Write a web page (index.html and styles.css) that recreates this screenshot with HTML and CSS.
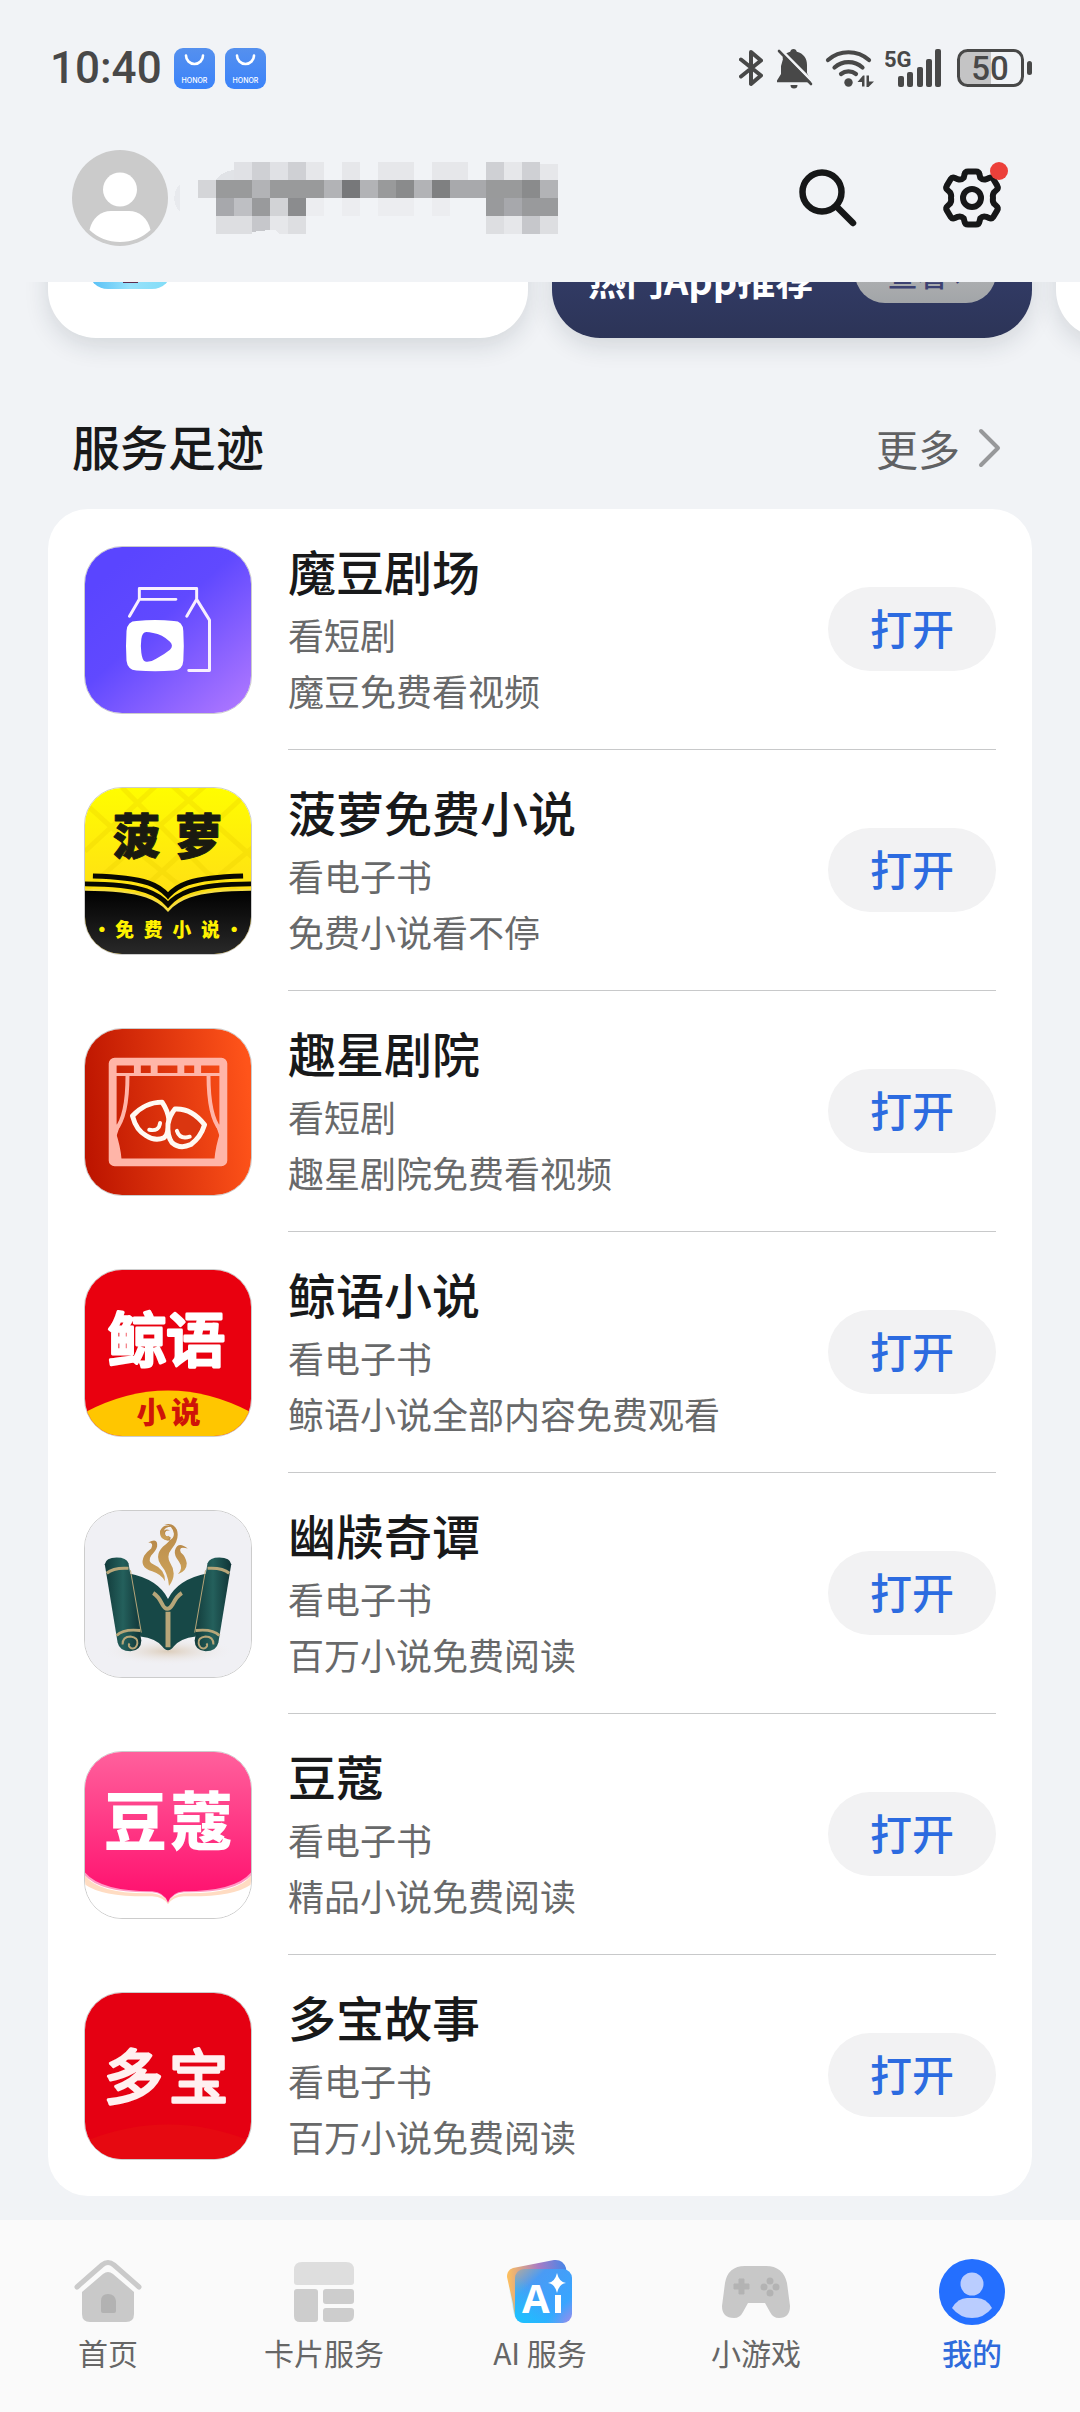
FILE: index.html
```html
<!DOCTYPE html>
<html lang="zh-CN">
<head>
<meta charset="utf-8">
<meta name="viewport" content="width=device-width, initial-scale=1">
<title>我的</title>
<link rel="stylesheet" href="styles.css">
</head>
<body>
<div class="status-bar">
  <span class="clock">10:40</span>
  <svg class="honor" viewBox="0 0 41 41" aria-hidden="true">
    <defs><linearGradient id="honor-bg" x1="0" y1="0" x2="0" y2="1"><stop offset="0" stop-color="#5590ee"/><stop offset="1" stop-color="#3b83fa"/></linearGradient></defs>
    <rect width="41" height="41" rx="9" fill="url(#honor-bg)"/>
    <path d="M12 7.500a8.500 8.500 0 0 0 17 0" fill="none" stroke="#fff" stroke-width="2.600" stroke-linecap="round"/>
    <text x="20.500" y="35" class="honor-name">HONOR</text>
  </svg>
  <svg class="honor" viewBox="0 0 41 41" aria-hidden="true">
    <rect width="41" height="41" rx="9" fill="url(#honor-bg)"/>
    <path d="M12 7.500a8.500 8.500 0 0 0 17 0" fill="none" stroke="#fff" stroke-width="2.600" stroke-linecap="round"/>
    <text x="20.500" y="35" class="honor-name">HONOR</text>
  </svg>
  <div class="status-icons">
    <svg width="24" height="40" viewBox="0 0 24 40" fill="none" stroke="#484848" stroke-width="4" stroke-linecap="round" stroke-linejoin="round" aria-hidden="true">
      <path d="M2 11.500 22 27.500 12 36V4l10 8.500L2 28.500"/>
    </svg>
    <svg width="38" height="42" viewBox="0 0 38 42" aria-hidden="true">
      <path d="M18.500 2c1.800 0 3 1.200 3.300 2.800C28.500 6.400 32 11.500 32 18v8l4 7.500v1.800H2v-1.800L6 27V18c0-6.500 3-11.600 9.200-13.200C15.500 3.200 16.700 2 18.500 2zM15.500 38h7a3.500 3.500 0 0 1-7 0z" fill="#484848"/>
      <path d="M5 2 41 38M3 2l1 12" stroke="#f1f3f6" stroke-width="3"/>
      <path d="M0 0h1l7 12-4 14z" fill="#f1f3f6"/>
      <path d="m4 4 32 33" stroke="#484848" stroke-width="2.600" stroke-linecap="round"/>
    </svg>
    <svg class="wifi" width="48" height="40" viewBox="0 0 48 40" fill="none" stroke="#484848" stroke-width="4.200" stroke-linecap="round" aria-hidden="true">
      <path d="M3 12a31 31 0 0 1 41 0M9.500 19.500a21 21 0 0 1 28 0M16 26a12 12 0 0 1 15 0"/>
      <circle cx="23.500" cy="34.500" r="4.200" fill="#484848" stroke="none"/>
      <path d="M32.500 34 38 27.500h1.500V38.500H37V34zM49 33.500 43.500 39H41.500V27.500H44v6z" fill="#484848" stroke="none"/>
    </svg>
    <svg width="60" height="40" viewBox="0 0 60 40" fill="#484848" aria-hidden="true">
      <text x="-1" y="19" class="signal-label">5G</text>
      <rect x="13" y="28" width="6" height="11" rx="2"/><rect x="22" y="24" width="6" height="15" rx="2"/><rect x="32" y="19" width="6" height="20" rx="2"/><rect x="41" y="11" width="6" height="28" rx="2"/><rect x="50" y="1" width="6" height="38" rx="2"/>
    </svg>
    <svg width="75" height="40" viewBox="0 0 75 40" aria-hidden="true">
      <path d="M11 3h23v34H11a9 9 0 0 1-9-9V12a9 9 0 0 1 9-9z" fill="#c4c4c5"/>
      <rect x="1.500" y="2.500" width="64" height="35" rx="9" fill="none" stroke="#484848" stroke-width="3"/>
      <rect x="70" y="13" width="5" height="14" rx="2.500" fill="#484848"/>
      <text x="33" y="32" class="battery-level">50</text>
    </svg>
  </div>
</div>

<header class="profile">
  <svg class="avatar" viewBox="0 0 96 96" role="img" aria-label="头像">
    <circle cx="48" cy="48" r="48" fill="#cbcbcb"/>
    <circle cx="48" cy="39.500" r="17" fill="#fff"/>
    <path d="M17.500 80C20 68 29 61 39 61h18c10 0 19 7 21.500 19C70 88 60 92 48 92s-22-4-30.500-12z" fill="#fff"/>
  </svg>
  <svg class="masked-name" viewBox="0 0 396 72" shape-rendering="crispEdges" role="img" aria-label="已隐藏的账号">
    <path d="M9 22a20 20 0 0 0 0 28z" fill="#e8eaee"/>
    <path d="M45 17c6-7 14-9 20-9V0h-2 18v18H45z" fill="#e1e3e7"/>
    <g transform="translate(27 0)">
      <path d="M36 0h18v18H36zM72 0h18v18H72z" fill="#e0e1e5"/>
      <path d="M54 0h18v18H54zM90 0h18v18H90zM288 0h18v18h-18zM324 0h18v18h-18z" fill="#cfd0d4"/>
      <path d="M108 0h18v18h-18zM144 0h18v18h-18zM180 0h36v18h-36zM234 0h36v18h-36zM306 0h18v18h-18zM342 2h18v16h-18z" fill="#e6e7ea"/>
      <path d="M0 18h18v18H0z" fill="#d4d5d8"/>
      <path d="M18 18h36v18H18zM72 18h54v18H72zM180 18h18v18h-18zM288 18h36v18h-36z" fill="#999a9b"/>
      <path d="M54 18h18v18H54zM126 18h18v18h-18zM162 18h18v18h-18zM216 18h18v18h-18zM342 18h18v18h-18z" fill="#b2b3b6"/>
      <path d="M144 18h18v18h-18z" fill="#77787a"/>
      <path d="M198 18h18v18h-18zM324 18h18v18h-18z" fill="#8a8b8c"/>
      <path d="M234 18h18v18h-18z" fill="#7f8081"/>
      <path d="M252 18h36v18h-36z" fill="#a8a9ac"/>
      <path d="M18 36h18v18H18zM306 36h18v18h-18z" fill="#a7a8ac"/>
      <path d="M36 36h18v18H36z" fill="#bebfc3"/>
      <path d="M54 36h18v18H54zM288 36h18v18h-18zM324 36h36v18h-36z" fill="#999a9c"/>
      <path d="M72 36h18v18H72z" fill="#d2d3d6"/>
      <path d="M90 36h18v18H90z" fill="#8b8c8e"/>
      <path d="M108 36h18v18h-18zM144 36h18v18h-18zM180 36h36v18h-36zM234 36h18v18h-18z" fill="#ecedf0"/>
      <path d="M18 54h36v18H18zM90 54h18v18H90zM288 54h18v18h-18zM342 54h18v18h-18z" fill="#dddee1"/>
      <path d="M54 54h18v14l-18 2zM324 54h18v18h-18z" fill="#c6c7cb"/>
      <path d="M72 54h18v18h-9l-3-4h-6zM306 54h18v18h-18z" fill="#e6e7ea"/>
    </g>
  </svg>
  <div class="actions">
    <button class="icon-button" type="button" aria-label="搜索">
      <svg viewBox="0 0 72 72" fill="none" stroke="#161718" stroke-linecap="round" aria-hidden="true">
        <circle cx="30" cy="30" r="19.500" stroke-width="6.500"/><path d="m45 45 16 16" stroke-width="6.500"/>
      </svg>
    </button>
    <button class="icon-button" type="button" aria-label="设置">
      <svg viewBox="0 0 72 72" fill="none" stroke="#161718" stroke-width="6" stroke-linejoin="round" aria-hidden="true">
        <path d="M32 9.500h8q3 0 3.500 3l.8 3.200q2.500 2.700 6 1.500l2.700-1.200q2.800-1.200 4.400 1.200l3.800 6.400q1.400 2.600-.8 4.500l-2.200 2q-2 2.800-1.200 5.900-.8 3.100 1.200 5.900l2.200 2q2.200 1.900.8 4.500l-3.800 6.400q-1.600 2.400-4.400 1.200l-2.700-1.200q-3.500-1.200-6 1.500l-.8 3.200q-.5 3-3.500 3h-8q-3 0-3.500-3l-.8-3.200q-2.500-2.700-6-1.500L19 56q-2.800 1.200-4.400-1.200l-3.800-6.400q-1.400-2.600.8-4.500l2.200-2q2-2.800 1.200-5.900.8-3.100-1.200-5.900l-2.200-2q-2.200-1.900-.8-4.500l3.800-6.400Q16.200 14.800 19 16l2.700 1.200q3.500 1.200 6-1.500l.8-3.200q.5-3 3.500-3z"/>
        <circle cx="36" cy="36" r="9"/>
      </svg>
      <span class="dot"></span>
    </button>
  </div>
</header>

<main>
  <div class="carousel">
    <article class="promo">
      <svg class="promo-icon" viewBox="0 0 84 84" aria-hidden="true">
        <defs><linearGradient id="promo-bg"><stop offset="0" stop-color="#52bdf5"/><stop offset=".5" stop-color="#98e2fb"/><stop offset="1" stop-color="#7fdcf7"/></linearGradient></defs>
        <rect width="84" height="84" rx="20" fill="url(#promo-bg)"/><path d="M35 60h15v18H35z" fill="#5d2b4d"/>
      </svg>
    </article>
    <article class="promo promo-dark">
      <strong class="promo-title">热门App推荐</strong>
      <button class="promo-button" type="button">查看 ›</button>
    </article>
    <article class="promo"></article>
  </div>

  <section class="history">
    <div class="section-head">
      <h1 class="section-title">服务足迹</h1>
      <a class="more" href="#more">更多
        <svg class="chevron" viewBox="0 0 24 40" fill="none" stroke="#97989a" stroke-width="4" stroke-linecap="round" stroke-linejoin="round" aria-hidden="true"><path d="m3 3 17 17L3 37"/></svg>
      </a>
    </div>

    <ul class="app-list">
      <li class="app">
        <svg class="app-icon" viewBox="0 0 168 168" aria-hidden="true">
          <defs><linearGradient id="modou" x1=".2" y1=".1" x2="1" y2="1"><stop offset="0" stop-color="#5a45ff"/><stop offset=".35" stop-color="#6049ff"/><stop offset="1" stop-color="#b37aff"/></linearGradient></defs>
          <rect width="168" height="168" fill="url(#modou)"/>
          <path d="M45 70 55 53V42h58v11l-10 17M55 53h37M113 53l13 21v51h-21" fill="none" stroke="#f8efff" stroke-width="3" stroke-linecap="round" stroke-linejoin="round"/>
          <path fill-rule="evenodd" d="M52 75q19-2 38 0 9 0 9.500 10 1 15 0 30-.5 9-9.500 10-19 1.500-38 0-9-1-10-10-1-15 0-30 1-10 10-10zM62 86q-4 0-5 7-1 8 0 14 1 8 4 9 5 1 11-3 8-4 14-9 4-4 0-8-8-8-17-9-4-1-7-1z" fill="#fff"/>
        </svg>
        <div class="app-body">
          <div class="app-text"><h2 class="app-name">魔豆剧场</h2><p class="app-note">看短剧</p><p class="app-note">魔豆免费看视频</p></div>
          <button class="open" type="button">打开</button>
        </div>
      </li>
      <li class="app">
        <svg class="app-icon" viewBox="0 0 168 168" aria-hidden="true">
          <defs>
            <linearGradient id="boluo" x1="0" y1="0" x2="0" y2="1"><stop offset="0" stop-color="#fffd00"/><stop offset="1" stop-color="#ffce20"/></linearGradient>
            <linearGradient id="boluo-dark" x1="0" y1="0" x2="0" y2="1"><stop offset="0" stop-color="#000"/><stop offset="1" stop-color="#292929"/></linearGradient>
          </defs>
          <rect width="168" height="168" fill="url(#boluo)"/>
          <path d="M-4 12 60 70l50 40M34-4l90 90 50 30M84-6l90 80M0 64 76-6M0 104 126-6M50 110 172-2M110 110l60-50" fill="none" stroke="#e8cd00" stroke-opacity=".3" stroke-width="5"/>
          <path d="M0 103q40 0 62 7 14 5 22 14 8-9 22-14 22-7 62-7v65H0z" fill="url(#boluo-dark)"/>
          <path d="M8 89q38 1 56 7 12 4 20 13 8-9 20-13 18-6 56-7M0 97q42 0 62 7 14 5 22 14 8-9 22-14 20-7 62-7" fill="none" stroke="#080800" stroke-width="5"/>
          <path d="M0 103q42 0 62 7 14 5 22 14 8-9 22-14 20-7 62-7" fill="none" stroke="#f4dc45" stroke-width="2"/>
          <g class="logo-text boluo-name"><text x="52" y="67">菠</text><text x="115" y="67">萝</text></g>
          <g class="logo-text boluo-sub"><text x="17" y="151">·</text><text x="40" y="151">免</text><text x="69" y="151">费</text><text x="98" y="151">小</text><text x="127" y="151">说</text><text x="151" y="151">·</text></g>
        </svg>
        <div class="app-body">
          <div class="app-text"><h2 class="app-name">菠萝免费小说</h2><p class="app-note">看电子书</p><p class="app-note">免费小说看不停</p></div>
          <button class="open" type="button">打开</button>
        </div>
      </li>
      <li class="app">
        <svg class="app-icon" viewBox="0 0 168 168" aria-hidden="true">
          <defs><linearGradient id="quxing" x1="0" y1=".55" x2="1" y2=".45"><stop offset="0" stop-color="#bd1500"/><stop offset="1" stop-color="#ff541a"/></linearGradient></defs>
          <rect width="168" height="168" fill="url(#quxing)"/>
          <g fill="none" stroke="#ffb5a8">
            <rect x="28" y="33" width="112" height="102" rx="2" stroke-width="8"/>
            <path d="M31 46h106" stroke-width="3"/>
            <path d="M53 36v10M70 36v10M97 36v10M114 36v10" stroke-width="7"/>
            <path d="M43 47q0 41-12 55M125 47q0 41 12 55" stroke-width="4"/>
          </g>
          <path d="M31 104q5 15 6 28h-6zM137 104q-5 15-6 28h6zM31 96l4 3-4 12zM137 96l-4 3 4 12z" fill="#ffb5a8"/>
          <g fill="none" stroke="#fff9f2" stroke-width="5" stroke-linejoin="round" stroke-linecap="round">
            <path d="M78 74q-17 0-30 14 4 15 14 20 9 6 18 2 5-4 5-18-1-9-7-18z"/>
            <path d="M91 81q17-1 30 16-4 13-14 20-11 5-19-2-5-7-4-19 2-9 7-15z" fill="#da3610"/>
            <path d="M65 102q10 2 11-7M93 103q3 9 13 6" stroke-width="4"/>
          </g>
        </svg>
        <div class="app-body">
          <div class="app-text"><h2 class="app-name">趣星剧院</h2><p class="app-note">看短剧</p><p class="app-note">趣星剧院免费看视频</p></div>
          <button class="open" type="button">打开</button>
        </div>
      </li>
      <li class="app">
        <svg class="app-icon" viewBox="0 0 168 168" aria-hidden="true">
          <rect width="168" height="168" fill="#e9000f"/>
          <path d="M0 144q84-44 168 0v24H0z" fill="#ffc600"/>
          <g class="logo-text jingyu-name"><text x="53" y="93">鲸</text><text x="112" y="93">语</text></g>
          <g class="logo-text jingyu-sub"><text x="67" y="155">小</text><text x="102" y="155">说</text></g>
        </svg>
        <div class="app-body">
          <div class="app-text"><h2 class="app-name">鲸语小说</h2><p class="app-note">看电子书</p><p class="app-note">鲸语小说全部内容免费观看</p></div>
          <button class="open" type="button">打开</button>
        </div>
      </li>
      <li class="app">
        <svg class="app-icon" viewBox="0 0 168 168" aria-hidden="true">
          <defs>
            <linearGradient id="roll"><stop offset="0" stop-color="#123b3b"/><stop offset=".5" stop-color="#24605c"/><stop offset="1" stop-color="#103436"/></linearGradient>
            <linearGradient id="gold" x1="0" y1="0" x2="0" y2="1"><stop offset="0" stop-color="#b98a4a"/><stop offset="1" stop-color="#cda35a"/></linearGradient>
            <radialGradient id="floor"><stop offset="0" stop-color="#dccdbb"/><stop offset="1" stop-color="#f0f0f4" stop-opacity="0"/></radialGradient>
          </defs>
          <rect width="168" height="168" fill="#f0f0f4"/>
          <ellipse cx="84" cy="142" rx="68" ry="14" fill="url(#floor)"/>
          <path d="M44 63q30 6 40 26 10-20 40-26l-12 64q-16 2-22 10-6 8-12 0-6-8-22-10z" fill="#174847"/>
          <path d="M20 54q1-7 12-7 10 0 12 6l13 78q0 10-11 11-11 0-13-9z" fill="url(#roll)"/>
          <path d="M148 54q-1-7-12-7-10 0-12 6l-13 78q0 10 11 11 11 0 13-9z" fill="url(#roll)"/>
          <g fill="none" stroke="#b7a679" stroke-width="3">
            <path d="M22 63q7-6 22-5M146 63q-7-6-22-5M32 126q7-7 24-5M136 126q-7-7-24-5"/>
            <path d="M46 60l11 63M122 60l-11 63" stroke-width="1"/>
            <path d="M38 135q0-8 8-8 8 1 7 7-1 6-6 5-4-2-2-5M130 135q0-8-8-8-8 1-7 7 1 6 6 5 4-2 2-5" stroke-width="2"/>
            <path d="M69 83q5 3 9 11 5 10 11 0 4-8 9-11" stroke-width="4"/>
            <path d="M84 102v36" stroke-width="5"/>
          </g>
          <g fill="url(#gold)">
            <path d="M86 26q-5 1-5-4 1-3 5-2-4-3-7 1-3 8 5 9 6-1 6-7-2-10-10-9 9-3 13 5 3 9-5 19-6 7-2 14 8 12-1 24-1-13-8-21-7-10 2-19 10-8 7-10z"/>
            <path d="M76 20q4-8 12-4-9 0-8 6 1 5 5 3 1 4-4 4-6-2-5-9z"/>
            <path d="M64 32q10-6 9 4-1 4-6 9-4 6 2 9 12 5 12 17-4-7-13-10-14-4-8-16 3-4 7-7 3-6-3-6z"/>
            <path d="M104 38q-10-8-13 2-1 5 4 11 5 7-1 13 9-3 9-11-1-7-6-11-3-7 7-4z"/>
          </g>
        </svg>
        <div class="app-body">
          <div class="app-text"><h2 class="app-name">幽牍奇谭</h2><p class="app-note">看电子书</p><p class="app-note">百万小说免费阅读</p></div>
          <button class="open" type="button">打开</button>
        </div>
      </li>
      <li class="app">
        <svg class="app-icon" viewBox="0 0 168 168" aria-hidden="true">
          <defs><linearGradient id="doukou" x1="0" y1="0" x2="0" y2="1"><stop offset="0" stop-color="#ff609c"/><stop offset="1" stop-color="#ff0e6d"/></linearGradient></defs>
          <rect width="168" height="168" fill="#fff"/>
          <path d="M0 125q14 19 68 18 11 1 16 9 5-8 16-9 54 1 68-18v9q-18 13-68 12-12 1-16 8-4-7-16-8-50 1-68-12z" fill="#ffdcc2"/>
          <path d="M0 0h168v125q-16 18-68 17-12 1-16 11-4-10-16-11-52 1-68-17z" fill="#ff9bc4"/>
          <path d="M0 0h168v122q-16 19-68 19-12 1-16 11-4-10-16-11-52 0-68-19z" fill="url(#doukou)"/>
          <g class="logo-text doukou-name"><text x="51" y="94">豆</text><text x="118" y="94">蔻</text></g>
        </svg>
        <div class="app-body">
          <div class="app-text"><h2 class="app-name">豆蔻</h2><p class="app-note">看电子书</p><p class="app-note">精品小说免费阅读</p></div>
          <button class="open" type="button">打开</button>
        </div>
      </li>
      <li class="app">
        <svg class="app-icon" viewBox="0 0 168 168" aria-hidden="true">
          <rect width="168" height="168" fill="#e50012"/>
          <path d="M0 150q84-34 168 0v18H0z" fill="#e60911"/>
          <g class="logo-text duobao-name"><text x="49" y="107">多</text><text x="115" y="107">宝</text></g>
        </svg>
        <div class="app-body">
          <div class="app-text"><h2 class="app-name">多宝故事</h2><p class="app-note">看电子书</p><p class="app-note">百万小说免费阅读</p></div>
          <button class="open" type="button">打开</button>
        </div>
      </li>
    </ul>
  </section>
</main>

<nav class="tab-bar">
  <a class="tab" href="#home">
    <svg class="tab-icon" viewBox="0 0 72 72" aria-hidden="true">
      <path d="M5 31 30 9q6-5 12 0l25 22" fill="none" stroke="#cacaca" stroke-width="5" stroke-linecap="round"/>
      <path d="m10 36 21-18q5-4 10 0l21 18v22q0 8-8 8H18q-8 0-8-8z" fill="#c9c9c9"/>
      <path d="M29 45q0-7 7-7t8 7v10q0 2-2 2H31q-2 0-2-2z" fill="#b2b2b2"/>
    </svg>
    首页
  </a>
  <a class="tab" href="#cards">
    <svg class="tab-icon" viewBox="0 0 72 72" aria-hidden="true">
      <path d="M6 14q0-8 8-8h44q8 0 8 8v12q0 3-3 3H9q-3 0-3-3z" fill="#dedede"/>
      <path d="M9 33h18q3 0 3 3v27q0 3-3 3H12q-6 0-6-6V36q0-3 3-3zM38 33h25q3 0 3 3v9q0 3-3 3H38q-3 0-3-3v-9q0-3 3-3zM38 52h25q3 0 3 3v4q0 7-7 7H38q-3 0-3-3v-8q0-3 3-3z" fill="#cdcdcd"/>
    </svg>
    卡片服务
  </a>
  <a class="tab" href="#ai">
    <svg class="tab-icon" viewBox="0 0 72 72" aria-hidden="true">
      <defs>
        <linearGradient id="ai-back"><stop offset="0" stop-color="#ffc15c"/><stop offset=".5" stop-color="#a77cc5"/><stop offset="1" stop-color="#3887ed"/></linearGradient>
        <linearGradient id="ai-front" x1="0" y1="0" x2="1" y2="1"><stop offset="0" stop-color="#b3a99d"/><stop offset=".28" stop-color="#4a9bf5"/><stop offset=".75" stop-color="#38a5ff"/><stop offset="1" stop-color="#a08bea"/></linearGradient>
        <linearGradient id="ai-glow" x1="0" y1="1" x2=".8" y2=".2"><stop offset="0" stop-color="#18c5ff"/><stop offset=".6" stop-color="#18c5ff" stop-opacity="0"/></linearGradient>
      </defs>
      <path d="M9 12 50 4q9-1 12 8l4 44-50 8Q11 66 9 48L3 21q0-7 6-9z" fill="url(#ai-back)"/>
      <path d="M3 23 10 58q2 9 10 9l-3-40z" fill="url(#ai-glow)"/>
      <rect x="11" y="13" width="57" height="54" rx="9" fill="url(#ai-front)"/>
      <rect x="11" y="13" width="57" height="54" rx="9" fill="url(#ai-glow)"/>
      <text x="18" y="57" class="ai-letter">A</text>
      <path d="M51 39h6v18h-6zM53 17q2 9 9 10-7 1-9 10-2-9-9-10 7-1 9-10z" fill="#fff"/>
    </svg>
    AI 服务
  </a>
  <a class="tab" href="#games">
    <svg class="tab-icon" viewBox="0 0 72 72" aria-hidden="true">
      <path d="M5 27Q8 10 25 10h21q17 0 21 17l3 23q0 12-11 12-6 0-9-6l-5-9H28l-5 9q-3 6-9 6Q2 62 2 50z" fill="#c8c8c8"/>
      <path d="M19 23h5v5h5v5h-5v5h-5v-5h-5v-5h5z" fill="#b3b3b3" stroke="#b3b3b3" stroke-linejoin="round"/>
      <g fill="#b3b3b3"><circle cx="50" cy="25" r="3.500"/><circle cx="50" cy="37" r="3.500"/><circle cx="44" cy="31" r="3.500"/><circle cx="56" cy="31" r="3.500"/></g>
    </svg>
    小游戏
  </a>
  <a class="tab active" href="#me" aria-current="page">
    <svg class="tab-icon" viewBox="0 0 72 72" aria-hidden="true">
      <circle cx="36" cy="36" r="33" fill="#246fff"/>
      <circle cx="36" cy="28" r="11.500" fill="#bacdff"/>
      <path d="M16 52q6-10 15-10h10q9 0 15 10-8 10-20 10t-20-10z" fill="#bacdff"/>
    </svg>
    我的
  </a>
</nav>
</body>
</html>
```

FILE: styles.css
```css
* {
  box-sizing: border-box;
}

body {
  margin: 0;
  min-height: 100vh;
  display: flex;
  flex-direction: column;
  background: #f1f3f6;
  color: #18191a;
  font-family: "Noto Sans CJK SC", sans-serif;
  overflow-x: hidden;
}

h1, h2, p, ul {
  margin: 0;
  padding: 0;
}

svg {
  display: block;
  flex-shrink: 0;
}

button {
  padding: 0;
  border: 0;
  background: none;
  font: inherit;
  color: inherit;
}

a {
  color: inherit;
  text-decoration: none;
}

/* System status bar */
.status-bar {
  display: flex;
  align-items: center;
  gap: 10px;
  height: 136px;
  padding: 0 48px 0 50px;
}

.clock {
  margin-right: 2px;
  color: #484848;
  font: 500 44px/56px Roboto, sans-serif;
}

.honor {
  width: 41px;
  height: 41px;
}

.honor-name {
  fill: #fff;
  font: 500 7px Inter, sans-serif;
  text-anchor: middle;
}

.status-icons {
  display: flex;
  align-items: center;
  gap: 12px;
  margin-left: auto;
}

.wifi {
  overflow: visible;
}

.signal-label {
  font: 700 22px Roboto, sans-serif;
}

.battery-level {
  fill: #484848;
  font: 500 33px Roboto, sans-serif;
  text-anchor: middle;
}

/* Account header */
.profile {
  display: flex;
  align-items: center;
  height: 146px;
  padding: 0 72px 22px;
}

.avatar {
  width: 96px;
  height: 96px;
}

.masked-name {
  width: 396px;
  height: 72px;
  margin-left: 3px;
}

.actions {
  display: flex;
  gap: 72px;
  margin-left: auto;
}

.icon-button {
  position: relative;
  width: 72px;
  height: 72px;
}

.dot {
  position: absolute;
  top: 0;
  right: 0;
  width: 18px;
  height: 18px;
  border-radius: 50%;
  background: #ec403a;
}

/* Promo cards, scrolled partly under the header */
.carousel {
  display: flex;
  align-items: flex-end;
  gap: 24px;
  height: 112px;
  padding: 0 48px 56px;
  overflow: hidden;
}

.promo {
  display: flex;
  flex: 0 0 calc(50% - 12px);
  align-items: flex-end;
  justify-content: space-between;
  height: 148px;
  padding: 0 36px 35px;
  border-radius: 48px;
  background: #fff;
  box-shadow: 0 8px 24px rgba(30, 40, 60, 0.14);
}

.promo-dark {
  background: linear-gradient(#3a4478, #2c3457);
  color: #fff;
}

.promo-icon {
  width: 84px;
  height: 84px;
  margin: 0 0 14px 4px;
}

.promo-title {
  font-size: 38px;
  line-height: 48px;
}

.promo-button {
  width: 141px;
  height: 60px;
  border-radius: 30px;
  background: linear-gradient(#bbb, #a2a5a8);
  color: #3d4272;
  font-size: 30px;
  font-weight: 500;
  line-height: 40px;
}

/* Service history */
.history {
  padding: 0 48px 24px;
}

.section-head {
  display: flex;
  align-items: center;
  justify-content: space-between;
  height: 115px;
  padding: 0 30px 8px 24px;
}

.section-title {
  padding-bottom: 6px;
  font-size: 48px;
  font-weight: 500;
  line-height: 64px;
}

.more {
  display: flex;
  align-items: center;
  gap: 18px;
  color: #606163;
  font-size: 42px;
  line-height: 56px;
}

.chevron {
  width: 24px;
  height: 40px;
}

.app-list {
  border-radius: 40px;
  background: #fff;
  list-style: none;
}

.app {
  display: flex;
  align-items: center;
  gap: 36px;
  padding: 0 36px;
}

.app-icon {
  width: 168px;
  height: 168px;
  border: 1px solid rgba(0, 0, 0, 0.2);
  border-radius: 38px;
}

.app-body {
  display: flex;
  flex: 1;
  align-items: center;
  justify-content: space-between;
  min-height: 241px;
  border-bottom: 1px solid #c8c9ca;
}

.app:last-child .app-body {
  border-bottom-color: transparent;
}

.app-text {
  padding-bottom: 6px;
}

.app-name {
  font-size: 48px;
  font-weight: 500;
  line-height: 72px;
}

.app-note {
  color: #68696a;
  font-size: 36px;
  line-height: 56px;
}

.open {
  flex-shrink: 0;
  width: 168px;
  height: 84px;
  padding-bottom: 4px;
  border-radius: 42px;
  background: #f2f2f3;
  color: #2c6be0;
  font-size: 42px;
  font-weight: 500;
  line-height: 56px;
}

/* Lettering inside the app logos */
.logo-text {
  font-family: "Noto Sans CJK SC", sans-serif;
  font-weight: 900;
  stroke-linejoin: round;
  text-anchor: middle;
}

.boluo-name {
  fill: #1a1a10;
  stroke: #1a1a10;
  stroke-width: 1px;
  font-size: 48px;
}

.boluo-sub {
  fill: #fff200;
  font-size: 19px;
}

.jingyu-name {
  fill: #fff;
  stroke: #fff;
  stroke-width: 3px;
  font-size: 60px;
  font-weight: 500;
}

.jingyu-sub {
  fill: #cf1408;
  font-size: 30px;
}

.doukou-name {
  fill: #fff;
  font-size: 64px;
}

.duobao-name {
  fill: #fff0f0;
  stroke: #fff0f0;
  stroke-width: 3px;
  font-size: 60px;
  font-weight: 400;
}

.ai-letter {
  fill: #fff;
  font: 700 40px "Open Sans", sans-serif;
}

/* Bottom navigation */
.tab-bar {
  display: flex;
  margin-top: auto;
  min-height: 192px;
  padding: 36px 0;
  background: #fafafa;
}

.tab {
  display: flex;
  flex: 1;
  flex-direction: column;
  align-items: center;
  gap: 2px;
  color: #666;
  font-size: 30px;
  line-height: 44px;
}

.tab-icon {
  width: 72px;
  height: 72px;
}

.active {
  color: #2f6bdc;
  font-weight: 500;
}
```
